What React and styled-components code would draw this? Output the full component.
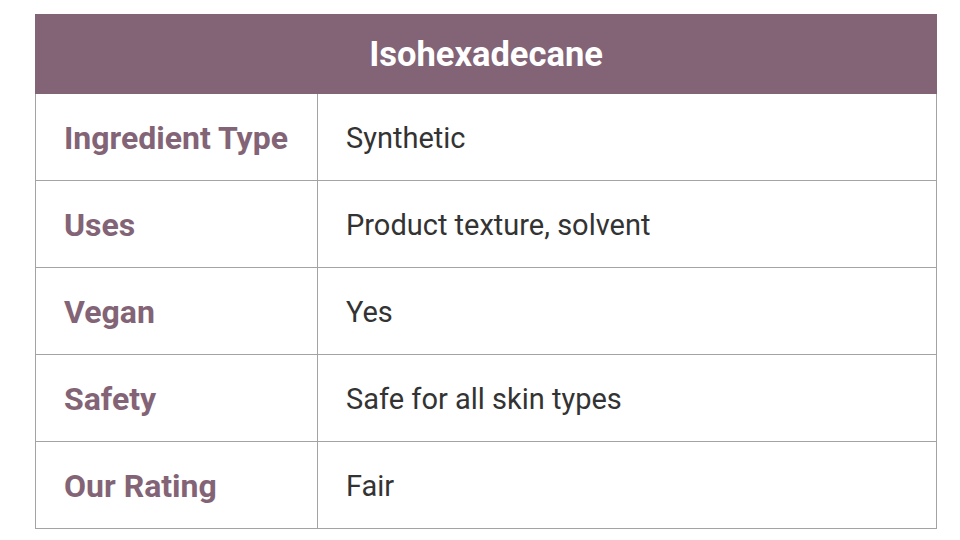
import React from "react";
import styled, { createGlobalStyle } from "styled-components";

const GlobalStyle = createGlobalStyle`
  body {
    margin: 0;
    background: #ffffff;
    font-family: Roboto, "Liberation Sans", sans-serif;
  }
`;

const Page = styled.div`
  width: 960px;
  height: 540px;
  padding: 14px 0 0 35px;
  box-sizing: border-box;
`;

const Table = styled.table`
  width: 902px;
  border-collapse: collapse;
  table-layout: fixed;
`;

const HeadCell = styled.th`
  height: 78px;
  padding: 0;
  background: #836476;
  color: #ffffff;
  font-size: 34.5px;
  font-weight: 700;
  text-align: center;
  border: 1px solid #836476;
`;

const Cell = styled.td`
  height: 87px;
  padding: 2px 0 0 28px;
  border: 1px solid #a3a3a3;
  box-sizing: border-box;
  font-size: ${(p) => (p.$label ? "32px" : "29px")};
  font-weight: ${(p) => (p.$label ? 700 : 400)};
  color: ${(p) => (p.$label ? "#836476" : "#333333")};
`;

const rows = [
  ["Ingredient Type", "Synthetic"],
  ["Uses", "Product texture, solvent"],
  ["Vegan", "Yes"],
  ["Safety", "Safe for all skin types"],
  ["Our Rating", "Fair"],
];

export default function App() {
  return (
    <Page>
      <GlobalStyle />
      <Table>
        <colgroup>
          <col style={{ width: 282 }} />
          <col />
        </colgroup>
        <thead>
          <tr>
            <HeadCell colSpan={2}>Isohexadecane</HeadCell>
          </tr>
        </thead>
        <tbody>
          {rows.map(([k, v]) => (
            <tr key={k}>
              <Cell $label>{k}</Cell>
              <Cell>{v}</Cell>
            </tr>
          ))}
        </tbody>
      </Table>
    </Page>
  );
}
